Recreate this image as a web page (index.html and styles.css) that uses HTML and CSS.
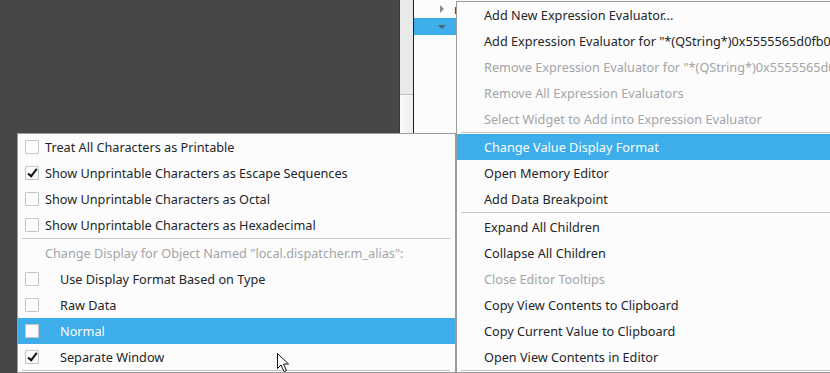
FILE: index.html
```html
<!DOCTYPE html>
<html lang="en">
<head>
<meta charset="UTF-8" />
<title>Locals context menu</title>
<link rel="stylesheet" href="styles.css">
</head>
<body>

<div class="desk">
  <div class="editor"></div>
  <div class="gutter">
    <div class="gutter-top"></div>
    <div class="gutter-rest"></div>
  </div>
  <div class="tree">
    <div class="tree-row">
      <span class="arrow arrow-closed"></span>
      <span class="tree-text">r</span>
    </div>
    <div class="tree-row selected">
      <span class="arrow arrow-open"></span>
      <span class="tree-text">r</span>
    </div>
  </div>
</div>

<div class="menu menu-main">
  <div class="item">Add New Expression Evaluator...</div>
  <div class="item">Add Expression Evaluator for "*(QString*)0x5555565d0fb0</div>
  <div class="item disabled">Remove Expression Evaluator for "*(QString*)0x5555565d0</div>
  <div class="item disabled">Remove All Expression Evaluators</div>
  <div class="item disabled">Select Widget to Add into Expression Evaluator</div>
  <div class="sep"></div>
  <div class="item active">Change Value Display Format</div>
  <div class="item">Open Memory Editor</div>
  <div class="item">Add Data Breakpoint</div>
  <div class="sep"></div>
  <div class="item">Expand All Children</div>
  <div class="item">Collapse All Children</div>
  <div class="item disabled">Close Editor Tooltips</div>
  <div class="item">Copy View Contents to Clipboard</div>
  <div class="item">Copy Current Value to Clipboard</div>
  <div class="item">Open View Contents in Editor</div>
  <div class="sep"></div>
</div>

<div class="menu menu-sub">
  <div class="item check"><span class="box"></span>Treat All Characters as Printable</div>
  <div class="item check"><span class="box checked"></span>Show Unprintable Characters as Escape Sequences</div>
  <div class="item check"><span class="box"></span>Show Unprintable Characters as Octal</div>
  <div class="item check"><span class="box"></span>Show Unprintable Characters as Hexadecimal</div>
  <div class="sep"></div>
  <div class="item disabled">Change Display for Object Named "local.dispatcher.m_alias":</div>
  <div class="item check deep"><span class="box"></span>Use Display Format Based on Type</div>
  <div class="item check deep"><span class="box"></span>Raw Data</div>
  <div class="item check deep active"><span class="box"></span>Normal</div>
  <div class="item check deep"><span class="box checked"></span>Separate Window</div>
  <div class="sep"></div>
</div>

<svg class="pointer" width="14" height="21" viewBox="0 0 14 21">
  <path d="M1.5 1.5 L1.5 16.5 L5 13 L8 19.5 L10.5 18.5 L7.5 12 L12.5 12 Z" fill="#fff" stroke="#111" stroke-width="1" stroke-linejoin="round"/>
</svg>

</body>
</html>
```

FILE: styles.css
```css
html, body {
  margin: 0;
  padding: 0;
  width: 830px;
  height: 373px;
  overflow: hidden;
  background-color: #474747;
  font-family: 'Noto Sans', 'DejaVu Sans', sans-serif;
  font-size: 12.7px;
  color: #232629;
}

.desk {
  display: flex;
  height: 373px;
}

.editor {
  width: 399px;
  background-color: #474747;
}

.gutter {
  width: 13px;
  display: flex;
  flex-direction: column;
  border-left: 1px solid #3a3a3a;
}

.gutter-top {
  height: 94px;
  background-color: #e8e9e9;
  border-bottom: 1px solid #bfc1c2;
}

.gutter-rest {
  flex: 1;
  background: linear-gradient(to right, #fafafa, #eeeeee);
}

.tree {
  flex: 1;
  border-left: 1px solid #1e1e1e;
  background-color: #fcfcfc;
}

.tree-row {
  height: 17px;
  display: flex;
  align-items: center;
  padding-left: 24px;
}

.tree-row:first-child {
  height: 18px;
}

.tree-row.selected {
  background-color: #3daee9;
}

.arrow {
  width: 0;
  height: 0;
  margin-right: 10px;
}

.arrow-closed {
  border-top: 4px solid transparent;
  border-bottom: 4px solid transparent;
  border-left: 4px solid #8a8c8e;
  margin-left: 2px;
}

.arrow-open {
  border-left: 4px solid transparent;
  border-right: 4px solid transparent;
  border-top: 4px solid #4d6578;
}

.tree-text {
  line-height: 17px;
}

.selected .tree-text {
  color: #d8eefa;
}

/* popup menus */
.menu {
  position: absolute;
  background-color: #fcfcfc;
  border: 1px solid #9a9b9c;
  white-space: nowrap;
  overflow: hidden;
}

.menu-main {
  left: 456px;
  top: 1px;
  width: 380px;
}

.menu-sub {
  left: 17px;
  top: 133px;
  width: 437px;
}

.item {
  height: 26px;
  line-height: 26px;
  padding-left: 27px;
  display: flex;
  align-items: center;
}

.item.disabled {
  color: #a3a5a7;
}

.item.active {
  background-color: #3daee9;
  color: #fcfcfc;
}

.sep {
  height: 2px;
  margin: 0 5px 0 4px;
  border-top: 1px solid #c4c5c6;
  box-sizing: border-box;
}

.item.check {
  padding-left: 7px;
}

.box {
  width: 12px;
  height: 12px;
  border: 1px solid #c3c4c5;
  border-radius: 1px;
  background-color: #fcfcfc;
  margin-right: 6px;
  position: relative;
  flex-shrink: 0;
}

.item.deep .box {
  margin-right: 21px;
}

.box.checked::after {
  content: '';
  position: absolute;
  left: 4px;
  top: 0px;
  width: 3px;
  height: 8px;
  border-right: 2px solid #111;
  border-bottom: 2px solid #111;
  transform: rotate(38deg);
}

.pointer {
  position: absolute;
  left: 276px;
  top: 352px;
}
```
